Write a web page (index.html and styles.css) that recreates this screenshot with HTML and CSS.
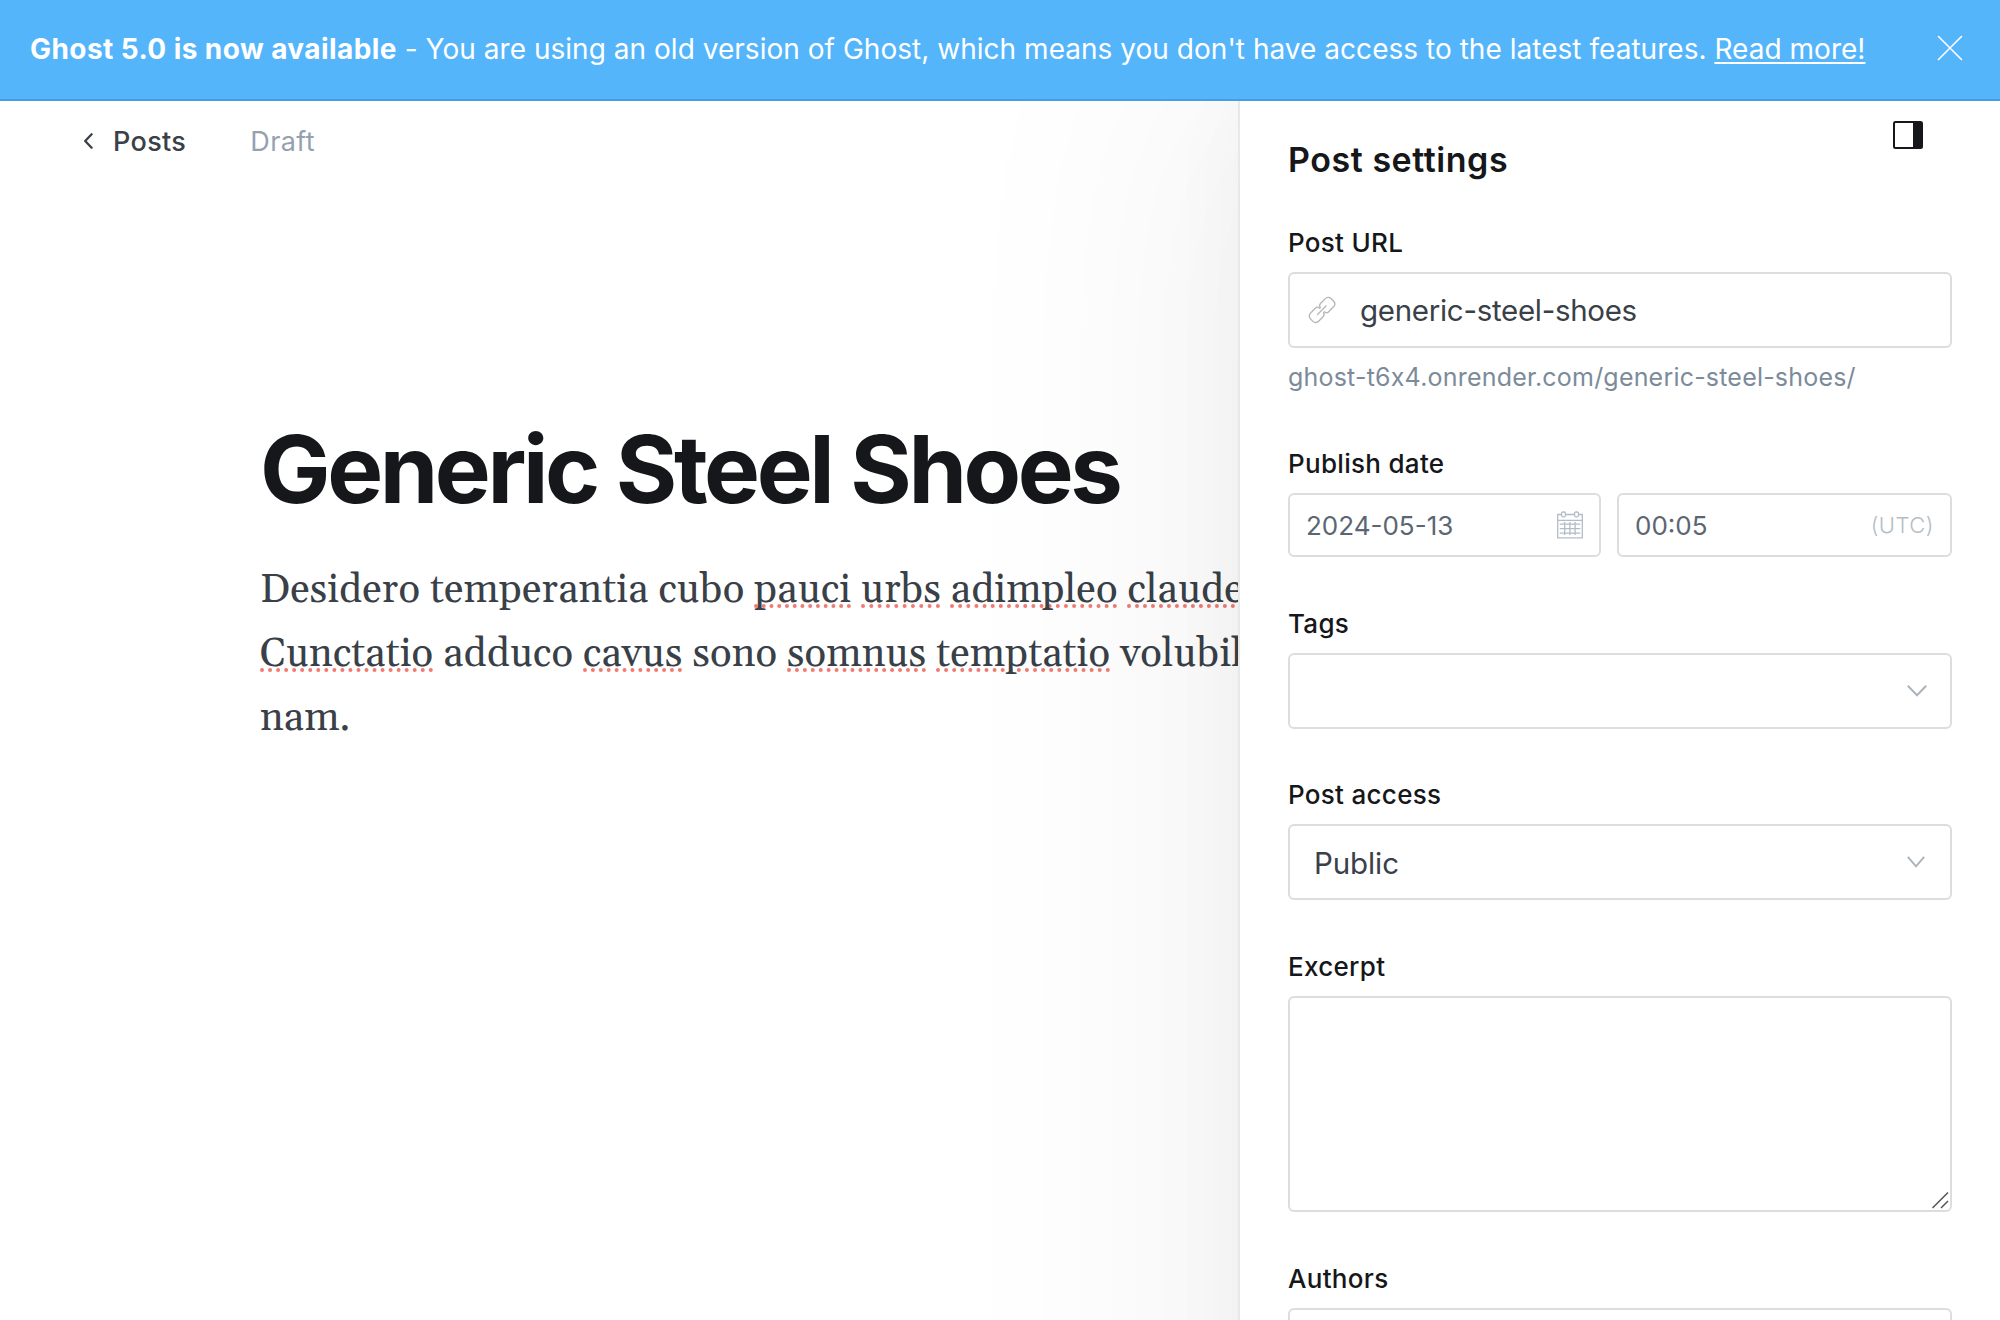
FILE: index.html
```html
<!DOCTYPE html>
<html lang="en">
<head>
<meta charset="utf-8">
<title>Generic Steel Shoes</title>
<link rel="stylesheet" href="styles.css">
</head>
<body>
<div class="app">
  <header class="banner">
    <p class="banner-text"><strong class="banner-strong">Ghost 5.0 is now available</strong><span class="banner-rest"> - You are using an old version of Ghost, which means you don't have access to the latest features. <a class="banner-link" href="#">Read more!</a></span></p>
    <button class="banner-close" aria-label="Close"><svg width="26" height="26" viewBox="0 0 26 26" fill="none" stroke="#fff" stroke-width="1.6" stroke-linecap="round"><path d="M1.5 1.5l23 23M24.5 1.5l-23 23"/></svg></button>
  </header>
  <div class="workspace">
    <main class="editor">
      <nav class="editor-nav">
        <a class="back" href="#"><svg class="back-icon" width="11" height="16" viewBox="0 0 11 16" fill="none" stroke="#394047" stroke-width="2.3" stroke-linecap="round" stroke-linejoin="round"><path d="M8.6 1.3L2.2 8l6.4 6.7"/></svg><span class="back-label">Posts</span></a>
        <span class="status">Draft</span>
      </nav>
      <h1 class="title">Generic Steel Shoes</h1>
      <div class="content">
        <p>Desidero temperantia cubo <span class="typo">pauci</span> <span class="typo">urbs</span> <span class="typo">adimpleo</span> <span class="typo">claude</span></p>
        <p><span class="typo">Cunctatio</span> adduco <span class="typo">cavus</span> sono <span class="typo">somnus</span> <span class="typo">temptatio</span> volubil</p>
        <p>nam.</p>
      </div>
    </main>
    <aside class="settings">
      <div class="settings-head">
        <h2 class="settings-title">Post settings</h2>
        <button class="toggle" aria-label="Toggle settings"><svg width="30" height="28" viewBox="0 0 30 28"><rect x="1" y="1" width="28" height="26" rx="1.5" fill="#fff" stroke="#15171a" stroke-width="2"/><path d="M20 1h9v26h-9z" fill="#15171a"/></svg></button>
      </div>
      <section class="field field-url">
        <label class="label">Post URL</label>
        <div class="input input-tall">
          <svg class="link-icon" width="28" height="28" viewBox="0 0 28 28" fill="none" stroke="#b5b5b5" stroke-width="1.3" stroke-linecap="round" stroke-linejoin="round"><path d="M9.5 18.5l8.5-8.5"/><path d="M11.6 12.2l-.3-.3a3 3 0 0 0-4 .4l-4.700 4.700a4 4 0 0 0-.3 5.700l2.600 2.700a4 4 0 0 0 5.700-.2l4.400-4.500a3.500 3.500 0 0 0 .5-4.300"/><path d="M16.300 15.800l.4.300a3 3 0 0 0 4-.4l4.800-4.900a4 4 0 0 0 .2-5.500l-2.700-2.800a4 4 0 0 0-5.700.1l-4.600 4.700a3.500 3.500 0 0 0-.4 4.300"/></svg>
          <span class="slug">generic-steel-shoes</span>
        </div>
        <p class="hint">ghost-t6x4.onrender.com/generic-steel-shoes/</p>
      </section>
      <section class="field field-date">
        <label class="label">Publish date</label>
        <div class="date-row">
          <div class="input input-short">
            <span class="date-value">2024-05-13</span>
            <svg width="28" height="28" viewBox="0 0 28 28" fill="none" stroke="#b3bdc8" stroke-width="1.3"><path d="M5.5 3.5H1.700v23.300h24.600V3.500h-3.800M9.500 3.500h9M1.700 9.300h24.600"/><rect x="5.500" y="1" width="4" height="4.800" rx="1.500"/><rect x="18.500" y="1" width="4" height="4.800" rx="1.500"/><path d="M3.700 13.200h20.600M3.700 17.700h20.600M3.700 22.200h20.600M8.700 11v13M13.900 11v13M19.100 11v13"/></svg>
          </div>
          <div class="input input-short">
            <span class="date-value">00:05</span>
            <span class="zone">(UTC)</span>
          </div>
        </div>
      </section>
      <section class="field field-tags">
        <label class="label">Tags</label>
        <div class="input input-tall input-select"><svg class="chevron" width="20" height="12" viewBox="0 0 20 12" fill="none" stroke="#abb4be" stroke-width="2"><path d="M.8.8L10 10.300 19.200.8"/></svg></div>
      </section>
      <section class="field field-access">
        <label class="label">Post access</label>
        <div class="input input-tall input-select"><span class="access-value">Public</span><svg class="chevron chevron-access" width="18" height="12" viewBox="0 0 18 12" fill="none" stroke="#abb4be" stroke-width="2"><path d="M.8.8L9 10.300 17.200.8"/></svg></div>
      </section>
      <section class="field field-excerpt">
        <label class="label">Excerpt</label>
        <div class="input input-area"><svg width="17" height="17" viewBox="0 0 17 17" fill="none" stroke="#555" stroke-width="1.5"><path d="M.5 16L16 .5M9 16l7-7"/></svg></div>
      </section>
      <section class="field field-authors">
        <label class="label">Authors</label>
        <div class="input input-tall"></div>
      </section>
    </aside>
  </div>
</div>
</body>
</html>
```
FILE: styles.css
```css
* { box-sizing: border-box; }
body { margin: 0; background: #fff; font-family: Inter, "Liberation Sans", sans-serif; color: #15171a; }
h1, h2, p { margin: 0; }
button { padding: 0; border: 0; background: none; display: flex; }
svg { display: block; flex: none; }
.app { width: 2000px; height: 1320px; overflow: hidden; display: flex; flex-direction: column; }

.banner { flex: none; height: 101px; padding: 0 37px 4px 30px; display: flex; align-items: center; justify-content: space-between; background: #54b5fb; border-bottom: 2px solid #459fdf; color: #fff; font-size: 28px; white-space: nowrap; }
.banner-text { padding-top: 2px; line-height: 40px; white-space: pre; }
.banner-strong { font-weight: 700; letter-spacing: 0.42px; }
.banner-rest { letter-spacing: 0.03px; }
.banner-link { color: #fff; text-decoration: underline; text-decoration-thickness: 2px; text-underline-offset: 3px; text-decoration-skip-ink: none; }

.workspace { flex: 1; min-height: 0; display: grid; grid-template-columns: 1238px 762px; overflow: hidden; }
.editor { min-width: 0; overflow: hidden; white-space: nowrap; }
.editor-nav { display: flex; align-items: center; gap: 64px; height: 80px; padding-left: 83px; font-size: 27px; }
.back { display: flex; align-items: center; gap: 19px; color: #394047; text-decoration: none; font-weight: 500; letter-spacing: 0.35px; }
.status { color: #95a1af; letter-spacing: 0.4px; }
.title { margin: 235px 0 0 260px; font-size: 94px; line-height: 106px; font-weight: 700; letter-spacing: -3.4px; }
.content { margin: 37px 0 0 260px; font-family: Gelasio, Georgia, "Noto Serif", "Liberation Serif", serif; font-size: 40px; line-height: 64px; letter-spacing: 0.2px; color: #394047; }
.typo { text-decoration: underline dotted #f07b72 4px; text-underline-offset: 2px; text-decoration-skip-ink: none; }

/* The panel runs past the fold, so its shadow stays even down to the window's edge. */
.settings { position: relative; margin-bottom: -400px; padding: 38px 48px 0; background: #fff; border-left: 2px solid #e8e8e9; box-shadow: 0 0 300px 50px rgba(0, 0, 0, 0.055), 0 0 80px rgba(0, 0, 0, 0.034); }
.settings-head { display: flex; justify-content: space-between; align-items: flex-start; height: 80px; }
.settings-title { font-size: 34px; line-height: 42px; font-weight: 600; letter-spacing: 0.55px; }
.toggle { margin: -18px 29px 0 0; }
.label { display: block; height: 30px; margin-bottom: 14px; font-size: 26px; line-height: 30px; font-weight: 500; letter-spacing: 0.3px; }
.input { display: flex; align-items: center; border: 2px solid #dddddf; border-radius: 6px; background: #fff; }
.input-tall { height: 76px; }
.input-short { height: 64px; justify-content: space-between; padding: 0 15px 0 16px; }
.link-icon { margin-left: 18px; }
.slug { margin-left: 24px; font-size: 29.5px; letter-spacing: -0.3px; color: #394047; }
.hint { margin-top: 12px; font-size: 25px; line-height: 34px; color: #7c8b9a; letter-spacing: 0.2px; }
.field-url { margin-top: 9px; }
.field-date { margin-top: 55px; }
.date-row { display: grid; grid-template-columns: 313px 335px; gap: 16px; }
.date-value { font-size: 26px; color: #5b6672; }
.zone { margin-right: 1px; font-size: 22px; font-weight: 300; color: #b3bdc8; letter-spacing: 0.5px; }
.field-tags { margin-top: 52px; }
.field-access { margin-top: 51px; }
.field-excerpt { margin-top: 52px; }
.field-authors { margin-top: 52px; }
.input-select { justify-content: flex-end; padding: 0 23px 0 24px; }
.access-value { margin-right: auto; padding-top: 2px; font-size: 29.5px; letter-spacing: -0.1px; color: #394047; }
.chevron-access { margin-right: 2px; }
.input-area { height: 216px; align-items: flex-end; justify-content: flex-end; padding: 0 1px 1px; }
```
